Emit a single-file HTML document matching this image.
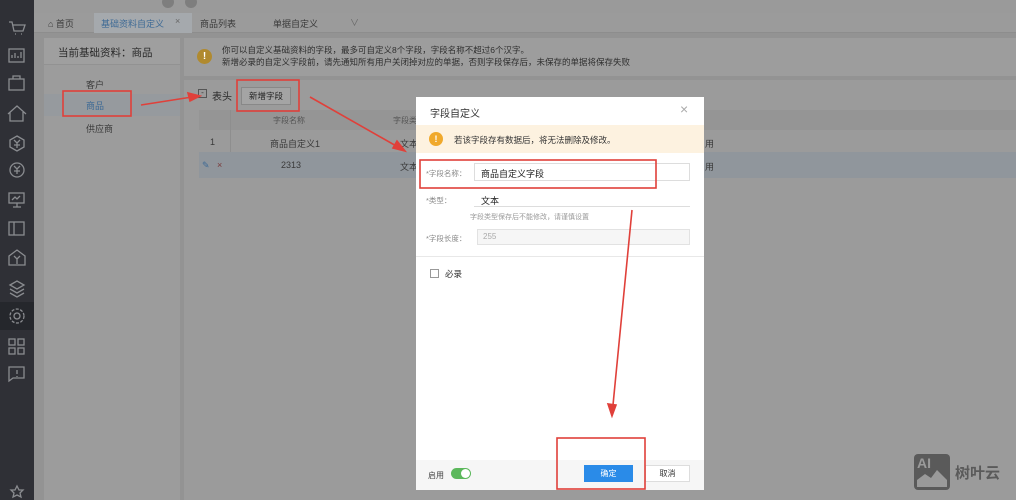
<!DOCTYPE html>
<html><head><meta charset="utf-8"><style>
*{margin:0;padding:0;box-sizing:border-box}
body{width:1016px;height:500px;overflow:hidden;background:#939393;font-family:"Liberation Sans","Noto Sans CJK SC",sans-serif;position:relative;color:#333}
.a{position:absolute}
.t{font-size:9px;color:#3a3a3a}
</style></head><body>
<!-- sidebar -->
<div class="a" style="left:0;top:0;width:34px;height:500px;background:#2f3036"></div>
<div class="a" style="left:0;top:302px;width:34px;height:28px;background:#25272c"></div>
<svg class="a" style="left:0;top:0" width="34" height="500" fill="none" stroke="#8a8c90" stroke-width="1.3">
<path d="M9 22h3l2 9h9l2-6H13M15 34h1M21 34h1"/>
<rect x="9" y="49" width="15" height="13"/><path d="M12 58v-3M15 58v-5M18 58v-2M21 58v-6"/>
<rect x="9" y="79" width="15" height="11"/><path d="M13 79v-3h7v3"/>
<path d="M8 114l9-8 9 8M10 112v9h13v-9"/>
<path d="M17 136l7 4v7l-7 4-7-4v-7zM14 140l3 3 3-3M17 143v5M14 145h6"/>
<circle cx="17" cy="170" r="7"/><path d="M14 166l3 3 3-3M17 169v5M14 171h6"/>
<rect x="9" y="193" width="15" height="10"/><path d="M17 203v4M13 207h8M12 200l3-3 2 2 3-3"/>
<rect x="9" y="222" width="15" height="13"/><path d="M14 222v13"/>
<path d="M9 256l8-6 8 6v9H9zM14 256l3 3 3-3M17 259v5"/>
<path d="M10 285l7-4 7 4-7 4zM10 289l7 4 7-4M10 293l7 4 7-4"/>
<circle cx="17" cy="316" r="3"/><circle cx="17" cy="316" r="7" stroke-dasharray="3 1.5"/>
<rect x="9" y="339" width="6" height="6"/><rect x="18" y="339" width="6" height="6"/><rect x="9" y="348" width="6" height="6"/><rect x="18" y="348" width="6" height="6"/>
<path d="M9 367h15v11H13l-4 3zM17 370v4M17 376v1"/>
<path d="M17 486l2 4h4l-3 3 1 4-4-2-4 2 1-4-3-3h4z"/>
</svg>
<!-- top header -->
<div class="a" style="left:34px;top:0;width:982px;height:13px;background:#9a9a9a"></div>
<div class="a" style="left:162px;top:-4px;width:12px;height:12px;border-radius:50%;background:#7e7e7e"></div>
<div class="a" style="left:185px;top:-4px;width:12px;height:12px;border-radius:50%;background:#7e7e7e"></div>
<!-- tabs -->
<div class="a" style="left:34px;top:13px;width:982px;height:20px;background:#9b9b9b;border-bottom:1px solid #8d8d8d"></div>
<div class="a t" style="left:48px;top:17px">⌂ 首页</div>
<div class="a" style="left:94px;top:13px;width:98px;height:20px;background:#a5a9ad"></div>
<div class="a t" style="left:101px;top:17px;color:#3e6a95">基础资料自定义</div>
<div class="a t" style="left:175px;top:16px;color:#666">×</div>
<div class="a t" style="left:200px;top:17px">商品列表</div>
<div class="a t" style="left:273px;top:17px">单据自定义</div>
<div class="a t" style="left:350px;top:16px;color:#666">∨</div>
<!-- left panel -->
<div class="a" style="left:44px;top:38px;width:136px;height:462px;background:#9c9c9c"></div>
<div class="a" style="left:44px;top:38px;width:136px;height:27px;background:#9f9f9f;border-bottom:1px solid #929292"></div>
<div class="a" style="left:58px;top:45px;font-size:10.5px;color:#2a2a2a">当前基础资料：商品</div>
<div class="a t" style="left:86px;top:78px">客户</div>
<div class="a" style="left:44px;top:94px;width:136px;height:22px;background:#969a9e"></div>
<div class="a t" style="left:86px;top:99px;color:#3e6a95">商品</div>
<div class="a t" style="left:86px;top:122px">供应商</div>
<!-- main -->
<div class="a" style="left:184px;top:38px;width:832px;height:38px;background:#9d9d9d"></div>
<div class="a" style="left:197px;top:49px;width:15px;height:15px;border-radius:50%;background:#b08a2f;color:#fff;font-size:10px;text-align:center;line-height:15px;font-weight:bold">!</div>
<div class="a" style="left:222px;top:44px;font-size:8.5px;line-height:12px;color:#2f2f2f">你可以自定义基础资料的字段，最多可自定义8个字段，字段名称不超过6个汉字。<br>新增必录的自定义字段前，请先通知所有用户关闭掉对应的单据，否则字段保存后，未保存的单据将保存失败</div>
<div class="a" style="left:184px;top:80px;width:832px;height:420px;background:#9b9b9b"></div>
<div class="a" style="left:198px;top:89px;width:9px;height:9px;border:1px solid #555;font-size:8px;line-height:6px;text-align:center">-</div>
<div class="a" style="left:212px;top:88px;font-size:10px;color:#2a2a2a">表头</div>
<div class="a" style="left:241px;top:87px;width:50px;height:18px;background:#a4a4a4;border:1px solid #888;font-size:8.5px;text-align:center;line-height:16px;color:#222">新增字段</div>
<div class="a" style="left:199px;top:110px;width:817px;height:20px;background:#959595"></div>
<div class="a" style="left:230px;top:110px;width:1px;height:68px;background:#8e8e8e"></div>
<div class="a t" style="left:273px;top:115px;color:#555;font-size:8px">字段名称</div>
<div class="a t" style="left:393px;top:115px;color:#555;font-size:8px">字段类</div>
<div class="a" style="left:199px;top:152px;width:817px;height:26px;background:#90969c"></div>
<div class="a t" style="left:210px;top:137px">1</div>
<div class="a t" style="left:270px;top:137px">商品自定义1</div>
<div class="a t" style="left:400px;top:137px">文本</div>
<div class="a t" style="left:705px;top:137px">用</div>
<div class="a t" style="left:202px;top:160px;color:#3e6a95">✎</div>
<div class="a t" style="left:217px;top:160px;color:#7a3a3a">×</div>
<div class="a t" style="left:281px;top:160px">2313</div>
<div class="a t" style="left:400px;top:160px">文本</div>
<div class="a t" style="left:705px;top:160px">用</div>
<!-- modal -->
<div class="a" style="left:416px;top:97px;width:288px;height:393px;background:#fff"></div>
<div class="a" style="left:430px;top:105px;font-size:10px;color:#333">字段自定义</div>
<div class="a" style="left:680px;top:101px;font-size:14px;color:#aaa">×</div>
<div class="a" style="left:416px;top:125px;width:288px;height:28px;background:#fdf2e0"></div>
<div class="a" style="left:429px;top:132px;width:14px;height:14px;border-radius:50%;background:#f0a92c;color:#fff;font-size:9px;font-weight:bold;text-align:center;line-height:14px">!</div>
<div class="a" style="left:454px;top:134px;font-size:8.5px;color:#333">若该字段存有数据后，将无法删除及修改。</div>
<div class="a" style="left:426px;top:168px;font-size:7.5px;color:#888">*字段名称：</div>
<div class="a" style="left:474px;top:163px;width:216px;height:18px;border:1px solid #ddd"></div>
<div class="a" style="left:481px;top:167px;font-size:9px;color:#222">商品自定义字段</div>
<div class="a" style="left:426px;top:195px;font-size:7.5px;color:#888">*类型：</div>
<div class="a" style="left:481px;top:194px;font-size:9px;color:#222">文本</div>
<div class="a" style="left:474px;top:206px;width:216px;height:1px;background:#ddd"></div>
<div class="a" style="left:470px;top:212px;font-size:7px;color:#999">字段类型保存后不能修改，请谨慎设置</div>
<div class="a" style="left:426px;top:233px;font-size:7.5px;color:#888">*字段长度：</div>
<div class="a" style="left:477px;top:229px;width:213px;height:16px;border:1px solid #e2e2e2;background:#f6f6f6"></div>
<div class="a" style="left:483px;top:232px;font-size:8px;color:#aaa">255</div>
<div class="a" style="left:416px;top:256px;width:288px;height:1px;background:#e8e8e8"></div>
<div class="a" style="left:430px;top:269px;width:9px;height:9px;border:1px solid #999"></div>
<div class="a" style="left:445px;top:268px;font-size:8.5px;color:#333">必录</div>
<div class="a" style="left:416px;top:460px;width:288px;height:30px;background:#f6f6f6"></div>
<div class="a" style="left:428px;top:470px;font-size:8px;color:#444">启用</div>
<div class="a" style="left:451px;top:468px;width:20px;height:11px;border-radius:6px;background:#5cb85c"></div>
<div class="a" style="left:461px;top:469px;width:9px;height:9px;border-radius:50%;background:#fff"></div>
<div class="a" style="left:584px;top:465px;width:49px;height:17px;background:#2a8be8;color:#fff;font-size:8px;text-align:center;line-height:17px">确定</div>
<div class="a" style="left:645px;top:465px;width:45px;height:17px;background:#fff;border:1px solid #ddd;color:#333;font-size:8px;text-align:center;line-height:15px">取消</div>
<!-- watermark -->
<div class="a" style="left:914px;top:454px;width:36px;height:36px;border-radius:4px;background:#5a5a5a"></div>
<div class="a" style="left:917px;top:455px;font-size:14px;font-weight:bold;color:#9a9a9a">AI</div>
<svg class="a" style="left:914px;top:454px" width="36" height="36"><path d="M3 33V26l8-6 6 4 6-8 10 10v7z" fill="#9a9a9a"/></svg>
<div class="a" style="left:955px;top:462px;font-size:15px;font-weight:bold;color:#5a5a5a">树叶云</div>
<!-- annotations -->
<svg class="a" style="left:0;top:0" width="1016" height="500" fill="none" stroke="#e0403a" stroke-width="1.6">
<rect x="63" y="91" width="68" height="25"/>
<rect x="237" y="80" width="62" height="31"/>
<rect x="420" y="160" width="236" height="28"/>
<rect x="557" y="438" width="88" height="51"/>
<path d="M141 105L192 97"/><path d="M200 96l-12-3 2 8z" fill="#e0403a"/>
<path d="M310 97L398 147"/><path d="M405 151l-8-10-4 7z" fill="#e0403a"/>
<path d="M632 210L613 405"/><path d="M612 416l-4-12 8 1z" fill="#e0403a"/>
</svg>
</body></html>
